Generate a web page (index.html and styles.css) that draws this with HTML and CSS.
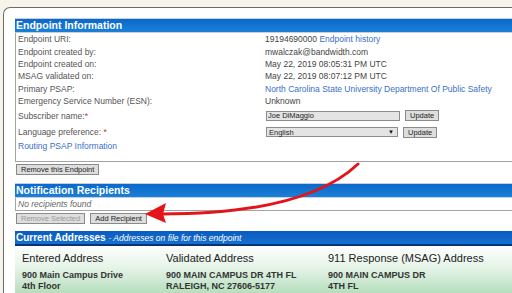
FILE: index.html
```html
<!DOCTYPE html>
<html lang="en">
<head>
  <meta charset="UTF-8" />
  <meta name="viewport" content="width=device-width, initial-scale=1" />
  <title>Endpoint Information</title>
  <link rel="stylesheet" href="styles.css">
</head>
<body>
  <div class="panel">
    <h2 class="bar">Endpoint Information</h2>
    <div class="box info">
      <div class="row"><span class="label">Endpoint URI:</span><span class="value">19194690000 <a href="#">Endpoint history</a></span></div>
      <div class="row"><span class="label">Endpoint created by:</span><span class="value">mwalczak@bandwidth.com</span></div>
      <div class="row"><span class="label">Endpoint created on:</span><span class="value">May 22, 2019 08:05:31 PM UTC</span></div>
      <div class="row"><span class="label">MSAG validated on:</span><span class="value">May 22, 2019 08:07:12 PM UTC</span></div>
      <div class="row"><span class="label">Primary PSAP:</span><span class="value"><a href="#">North Carolina State University Department Of Public Safety</a></span></div>
      <div class="row"><span class="label">Emergency Service Number (ESN):</span><span class="value">Unknown</span></div>
      <div class="row form-row tall">
        <span class="label">Subscriber name:<span class="req">*</span></span>
        <span class="value controls">
          <input class="text-input" type="text" value="Joe DiMaggio" />
          <button class="btn">Update</button>
        </span>
      </div>
      <div class="row form-row">
        <span class="label">Language preference: <span class="req">*</span></span>
        <span class="value controls">
          <span class="select"><span>English</span><span class="caret">&#9660;</span></span>
          <button class="btn">Update</button>
        </span>
      </div>
      <div class="row link-row"><a href="#">Routing PSAP Information</a></div>
    </div>
    <div class="actions">
      <button class="btn">Remove this Endpoint</button>
    </div>

    <h2 class="bar">Notification Recipients</h2>
    <div class="box recipients">
      <div class="empty">No recipients found</div>
    </div>
    <div class="actions last">
      <button class="btn" disabled>Remove Selected</button>
      <button class="btn">Add Recipient</button>
    </div>

    <h2 class="bar dark">Current Addresses <em>- Addresses on file for this endpoint</em></h2>
    <div class="addresses">
      <div class="col">
        <h3>Entered Address</h3>
        <p>900 Main Campus Drive<br>4th Floor</p>
      </div>
      <div class="col">
        <h3>Validated Address</h3>
        <p>900 MAIN CAMPUS DR 4TH FL<br>RALEIGH, NC 27606-5177</p>
      </div>
      <div class="col">
        <h3>911 Response (MSAG) Address</h3>
        <p>900 MAIN CAMPUS DR<br>4TH FL</p>
      </div>
    </div>
  </div>

  <!-- annotation arrow drawn over the page -->
  <svg class="arrow" width="512" height="293" viewBox="0 0 512 293">
    <path d="M358 164 C 320 200, 250 214, 162 214" fill="none" stroke="#e3151b" stroke-width="3" stroke-linecap="round" />
    <path d="M145 214 L166 203 L163 214 L166 223 Z" fill="#e3151b" />
  </svg>
</body>
</html>
```

FILE: styles.css
```css
body {
  margin: 0;
  background: #f6f4eb;
  font-family: "Liberation Sans", Arial, sans-serif;
  font-size: 8.5px;
  color: #555;
  overflow: hidden;
  height: 293px;
}
a {
  color: #3a6fc8;
  text-decoration: none;
}
.panel {
  margin: 7px 0 0 3px;
  border-top: 1px solid #6b6b6b;
  border-left: 1px solid #6b6b6b;
  border-top-left-radius: 7px;
  background: #fff;
  padding: 10px 0 0 11px;
  height: 320px;
}
.bar {
  margin: 0;
  height: 13px;
  line-height: 13px;
  padding-left: 1px;
  background: linear-gradient(#0a69cb, #1a80d8);
  border-top: 1px solid #c9ced8;
  border-bottom: 1px solid #c9ced8;
  color: #fff;
  font-size: 10.5px;
  font-weight: bold;
  white-space: nowrap;
}
.bar.dark {
  background: linear-gradient(#0a5cc0, #1470cf);
  border-top: none;
  border-bottom: 2px solid #06327a;
  font-size: 10px;
}
.bar em {
  font-weight: normal;
  font-size: 8.5px;
}
.box {
  border-left: 1px solid #a3a3a3;
  border-bottom: 1px solid #a3a3a3;
  padding-left: 2px;
}
.info {
  padding-bottom: 9px;
}
.row {
  display: grid;
  grid-template-columns: 247px 1fr;
  align-items: center;
  height: 12.4px;
  white-space: nowrap;
}
.value {
  color: #444;
}
.form-row {
  height: 15.6px;
}
.form-row.tall {
  height: 17px;
}
.link-row {
  display: block;
  height: 12px;
  line-height: 12px;
}
.req {
  color: #c0392b;
}
.controls {
  display: flex;
  align-items: center;
  gap: 5px;
  padding-left: 1px;
}
.text-input {
  box-sizing: border-box;
  width: 134px;
  height: 10px;
  margin: 0;
  padding: 0 1px;
  border: 1px solid #8c8c8c;
  background: #e4e4e4;
  font-family: inherit;
  font-size: 7.5px;
  color: #222;
}
.select {
  box-sizing: border-box;
  display: flex;
  justify-content: space-between;
  align-items: center;
  width: 132px;
  height: 10px;
  padding: 0 3px 0 2px;
  border: 1px solid #8c8c8c;
  background: #e4e4e4;
  font-size: 7.5px;
  color: #222;
}
.caret {
  font-size: 6px;
  color: #111;
}
.btn {
  box-sizing: border-box;
  height: 11px;
  margin: 0;
  padding: 0 4px;
  border: 1px solid #8a8a8a;
  background: #dedede;
  font-family: inherit;
  font-size: 7.5px;
  line-height: 9px;
  color: #222;
}
.btn:disabled {
  color: #9a9a9a;
}
.actions {
  display: flex;
  gap: 5px;
  margin: 2px 0 8px 1px;
}
.actions.last {
  margin: 2px 0 7px 1px;
}
.recipients {
  height: 12px;
}
.empty {
  line-height: 12px;
  font-style: italic;
  color: #666;
}
.addresses {
  display: grid;
  grid-template-columns: 144px 162px 1fr;
  padding: 5px 0 0 7px;
  height: 80px;
  background: linear-gradient(#fdfefd, #e6f4e8 25%, #9fd3a9 70%);
  color: #222;
}
.col h3 {
  margin: 0;
  height: 15px;
  line-height: 15px;
  font-size: 11px;
  font-weight: normal;
}
.col p {
  margin: 4px 0 0;
  font-size: 9px;
  line-height: 11px;
  font-weight: bold;
  color: #333;
}
.arrow {
  position: absolute;
  top: 0;
  left: 0;
  pointer-events: none;
}
```
